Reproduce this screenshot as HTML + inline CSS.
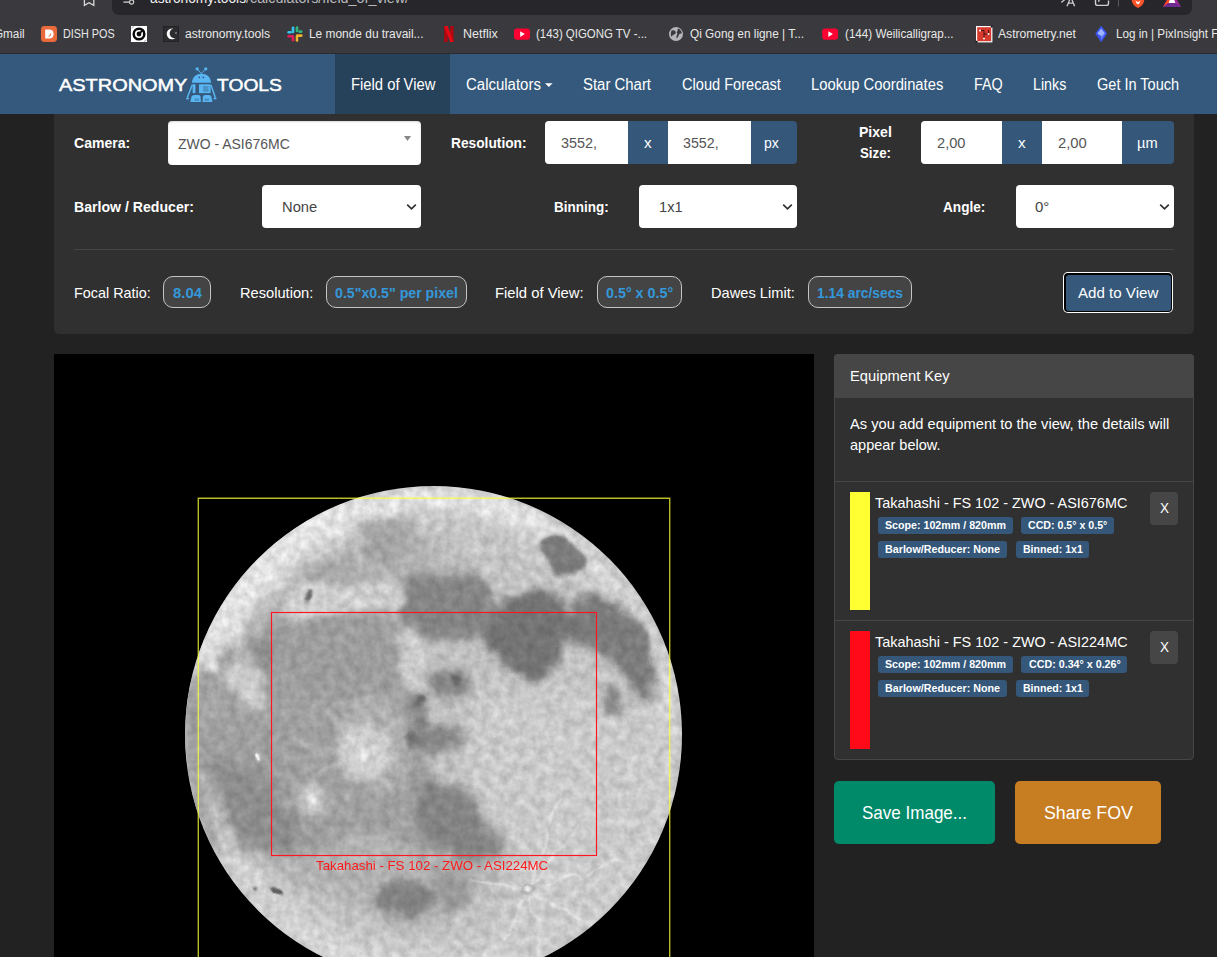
<!DOCTYPE html>
<html lang="en">
<head>
<meta charset="utf-8">
<title>Field of View Calculator</title>
<style>
*{box-sizing:border-box;margin:0;padding:0}
html,body{width:1217px;height:957px;overflow:hidden;background:#222;font-family:"Liberation Sans",sans-serif;}
#root{position:absolute;left:0;top:0;width:1217px;height:957px;overflow:hidden;background:#222}
.b{position:absolute}
.t{position:absolute;white-space:nowrap;transform-origin:0 50%;color:#fff}
svg{position:absolute;overflow:visible}
</style>
</head>
<body>
<div id="root">
<!-- page panel -->
<div class="b" style="left:54px;top:100px;width:1140px;height:234px;background:#303030;border-radius:0 0 5px 5px"></div>
<!-- browser chrome -->
<div class="b" style="left:0;top:0;width:1217px;height:54px;background:#3a3a3e"></div>
<div class="b" style="left:112px;top:-20px;width:1080px;height:34.5px;background:#26262b;border-radius:7px"></div>
<div class="b" style="left:0;top:53px;width:1217px;height:1px;background:#2c2c30"></div>
<!-- navbar -->
<div class="b" style="left:0;top:54px;width:1217px;height:60px;background:#34597c"></div>
<div class="b" style="left:335px;top:54px;width:115px;height:60px;background:#26415a"></div>
<!-- row 1 -->
<div class="b" style="left:168px;top:121px;width:253px;height:44px;background:#fff;border-radius:4px;box-shadow:inset 0 1px 2px rgba(0,0,0,0.16)"></div>
<svg style="left:404px;top:136px" width="7" height="5" viewBox="0 0 7 5"><path d="M0 0h7L3.5 5z" fill="#888"/></svg>
<div class="b" style="left:545px;top:121px;width:252px;height:43px;background:#34577a;border-radius:4px"></div>
<div class="b" style="left:545px;top:121px;width:83px;height:43px;background:#fff;border-radius:4px 0 0 4px"></div>
<div class="b" style="left:668px;top:121px;width:83px;height:43px;background:#fff"></div>
<div class="b" style="left:921px;top:121px;width:253px;height:43px;background:#34577a;border-radius:4px"></div>
<div class="b" style="left:921px;top:121px;width:81px;height:43px;background:#fff;border-radius:4px 0 0 4px"></div>
<div class="b" style="left:1042px;top:121px;width:80px;height:43px;background:#fff"></div>
<!-- row 2 selects -->
<div class="b" style="left:262px;top:185px;width:159px;height:43px;background:#fff;border-radius:4px"></div>
<div class="b" style="left:639px;top:185px;width:158px;height:43px;background:#fff;border-radius:4px"></div>
<div class="b" style="left:1016px;top:185px;width:158px;height:43px;background:#fff;border-radius:4px"></div>
<svg style="left:406.4px;top:202.5px" width="11" height="8" viewBox="0 0 11 8"><path d="M1.2 1.6L5.5 5.8L9.8 1.6" fill="none" stroke="#333" stroke-width="1.7"/></svg>
<svg style="left:782.4px;top:202.5px" width="11" height="8" viewBox="0 0 11 8"><path d="M1.2 1.6L5.5 5.8L9.8 1.6" fill="none" stroke="#333" stroke-width="1.7"/></svg>
<svg style="left:1159.4px;top:202.5px" width="11" height="8" viewBox="0 0 11 8"><path d="M1.2 1.6L5.5 5.8L9.8 1.6" fill="none" stroke="#333" stroke-width="1.7"/></svg>
<!-- hr -->
<div class="b" style="left:74px;top:249px;width:1100px;height:1px;background:#464646"></div>
<!-- stat badges -->
<div class="b" style="left:163px;top:276px;width:48px;height:32px;background:#444;border:1px solid #c4c4c4;border-radius:10px"></div>
<div class="b" style="left:326px;top:276px;width:141px;height:32px;background:#444;border:1px solid #c4c4c4;border-radius:10px"></div>
<div class="b" style="left:597px;top:276px;width:85px;height:32px;background:#444;border:1px solid #c4c4c4;border-radius:10px"></div>
<div class="b" style="left:808px;top:276px;width:104px;height:32px;background:#444;border:1px solid #c4c4c4;border-radius:10px"></div>
<!-- add to view button -->
<div class="b" style="left:1063px;top:272px;width:110px;height:41px;background:#fff;border-radius:5px"></div>
<div class="b" style="left:1064px;top:273px;width:108px;height:39px;background:#000;border-radius:4px"></div>
<div class="b" style="left:1065.5px;top:274.5px;width:105px;height:36px;background:#35587b;border-radius:3px"></div>
<!-- canvas -->
<div class="b" style="left:54px;top:354px;width:760px;height:610px;background:#000"></div>
<!-- equipment card -->
<div class="b" style="left:834px;top:354px;width:360px;height:406px;background:#303030;border:1px solid #464646;border-radius:4px"></div>
<div class="b" style="left:834px;top:354px;width:360px;height:44px;background:#464646;border-radius:4px 4px 0 0"></div>
<div class="b" style="left:835px;top:481px;width:358px;height:1px;background:#464646"></div>
<div class="b" style="left:835px;top:620px;width:358px;height:1px;background:#464646"></div>
<div class="b" style="left:850px;top:492px;width:20px;height:118px;background:#ffff33"></div>
<div class="b" style="left:850px;top:631px;width:20px;height:118px;background:#ff0a18"></div>
<div class="b" style="left:1150px;top:492px;width:28px;height:33px;background:#464646;border-radius:4px"></div>
<div class="b" style="left:1150px;top:631px;width:28px;height:33px;background:#464646;border-radius:4px"></div>
<!-- small badges item 1 -->
<div class="b" style="left:878px;top:517px;width:135px;height:17px;background:#34577a;border-radius:3px"></div>
<div class="b" style="left:1021px;top:517px;width:93px;height:17px;background:#34577a;border-radius:3px"></div>
<div class="b" style="left:878px;top:541px;width:129px;height:17px;background:#34577a;border-radius:3px"></div>
<div class="b" style="left:1016px;top:541px;width:73px;height:17px;background:#34577a;border-radius:3px"></div>
<!-- small badges item 2 -->
<div class="b" style="left:878px;top:656px;width:135px;height:17px;background:#34577a;border-radius:3px"></div>
<div class="b" style="left:1021px;top:656px;width:106px;height:17px;background:#34577a;border-radius:3px"></div>
<div class="b" style="left:878px;top:680px;width:129px;height:17px;background:#34577a;border-radius:3px"></div>
<div class="b" style="left:1016px;top:680px;width:73px;height:17px;background:#34577a;border-radius:3px"></div>
<!-- big buttons -->
<div class="b" style="left:834px;top:781px;width:161px;height:63px;background:#008a6a;border-radius:5px"></div>
<div class="b" style="left:1015px;top:781px;width:146px;height:63px;background:#c77d22;border-radius:5px"></div>
<svg style="left:0;top:0" width="1217" height="957" viewBox="0 0 1217 957">
<defs>
<clipPath id="cv"><rect x="54" y="354" width="760" height="603"/></clipPath>
<clipPath id="mc"><circle cx="433.5" cy="734.5" r="248.3"/></clipPath>
<filter id="b2" x="-20%" y="-20%" width="140%" height="140%"><feGaussianBlur stdDeviation="2"/></filter>
<filter id="b4" x="-20%" y="-20%" width="140%" height="140%"><feGaussianBlur stdDeviation="4"/></filter>
<filter id="b8" x="-20%" y="-20%" width="140%" height="140%"><feGaussianBlur stdDeviation="8"/></filter>
<filter id="b1" x="-20%" y="-20%" width="140%" height="140%"><feGaussianBlur stdDeviation="0.8"/></filter>
<filter id="disp" x="170" y="470" width="530" height="490" filterUnits="userSpaceOnUse" color-interpolation-filters="sRGB">
<feTurbulence type="fractalNoise" baseFrequency="0.035" numOctaves="3" seed="7" result="n"/>
<feDisplacementMap in="SourceGraphic" in2="n" scale="16" xChannelSelector="R" yChannelSelector="G"/>
</filter>
<filter id="tex" x="170" y="470" width="530" height="490" filterUnits="userSpaceOnUse" color-interpolation-filters="sRGB">
<feTurbulence type="fractalNoise" baseFrequency="0.11" numOctaves="4" seed="3" result="n0"/>
<feColorMatrix in="n0" type="matrix" values="1 0 0 0 0  1 0 0 0 0  1 0 0 0 0  0 0 0 0 1" result="n"/>
<feComposite in="SourceGraphic" in2="n" operator="arithmetic" k1="0.3" k2="0.86" k3="0" k4="0"/>
</filter>
<radialGradient id="mg" cx="433.5" cy="734.5" r="248.5" gradientUnits="userSpaceOnUse">
<stop offset="0" stop-color="#bebebe"/><stop offset="0.82" stop-color="#c2c2c2"/><stop offset="0.96" stop-color="#d4d4d4"/><stop offset="1" stop-color="#c4c4c4"/>
</radialGradient>
</defs>
<g clip-path="url(#cv)">
<g filter="url(#tex)">
<circle cx="433.5" cy="734.5" r="248.5" fill="url(#mg)"/>
<g clip-path="url(#mc)"><g filter="url(#disp)">
<g filter="url(#b8)">
<!-- broad tonal regions -->
<path d="M185 700 L215 640 L270 600 L330 560 L400 520 L440 540 L440 620 L400 700 L440 800 L500 870 L430 930 L330 900 L250 860 L200 800Z" fill="#b0b0b0"/>
<path d="M470 690 L600 690 L680 740 L660 860 L560 957 L500 957 L520 860 L470 780Z" fill="#c8c8c8"/>
<path d="M190 640 L230 560 L300 510 L380 490 L300 560 L240 620 L215 690Z" fill="#dcdcdc"/>
<path d="M205 830 L235 860 L290 905 L350 940 L330 957 L270 930 L215 870Z" fill="#cacaca"/>
</g>
<g filter="url(#b4)">
<!-- Procellarum / Imbrium -->
<path d="M272 625 L300 612 L345 610 L395 618 L408 640 L400 668 L410 690 L402 712 L420 745 L440 790 L470 815 L500 835 L498 858 L460 862 L420 850 L385 830 L340 838 L300 858 L265 850 L232 830 L215 790 L210 740 L222 690 L250 650Z" fill="#9e9e9e"/>
<!-- upper dark (Frigoris side / Serenitatis north) -->
<path d="M397 580 L440 572 L476 572 L496 602 L486 638 L440 640 L410 638 L398 610Z" fill="#838383"/>
<path d="M360 525 L400 520 L408 545 L395 563 L365 560Z" fill="#a2a2a2"/>
<path d="M300 565 L355 560 L360 595 L310 600Z" fill="#a8a8a8"/>
<!-- Serenitatis / Tranquillitatis -->
<path d="M487.7 620.4 L505.2 597.9 L535.3 590.3 L560.4 592.8 L570.4 610.4 L590.5 612.9 L593 630.5 L580.5 640.5 L560.4 643 L560.4 665.6 L547.9 678.1 L525.3 680.6 L505.2 665.6 L490.2 653 L482.7 635.5Z" fill="#727272"/>
<!-- Fecunditatis -->
<path d="M590 598 L620 600 L640 625 L650 660 L655 700 L640 700 L625 670 L600 655 L592 630Z" fill="#7e7e7e"/>
<path d="M603 686 L620 690 L622 720 L606 716Z" fill="#868686"/>
<!-- central dark band -->
<path d="M425 668 L468 670 L471 692 L442 698 L426 691Z" fill="#878787"/>
<path d="M404 697 L424 695 L428 724 L462 727 L465 747 L430 751 L407 746Z" fill="#868686"/>
<path d="M370 674 L392 672 L394 694 L372 696Z" fill="#9c9c9c"/>
<!-- Nubium -->
<path d="M420 782 L455 790 L478 800 L482 825 L500 835 L505 850 L490 858 L460 857 L440 850 L418 835Z" fill="#828282"/>
<!-- Humorum + patches -->
<ellipse cx="404" cy="898" rx="28" ry="18" fill="#818181"/>
<path d="M432 868 L470 872 L474 905 L445 915 L432 895Z" fill="#999"/>
<!-- bright highlands inside mare -->
<ellipse cx="374" cy="742" rx="38" ry="50" fill="#adadad"/>
<path d="M372 625 L396 630 L400 668 L372 672Z" fill="#a9a9a9"/>
<ellipse cx="364" cy="753" rx="27" ry="25" fill="#cecece"/>
<ellipse cx="312" cy="800" rx="16" ry="15" fill="#cacaca"/>
<path d="M225 660 L262 690 L268 715 L240 700 L222 680Z" fill="#c4c4c4"/>
<path d="M290 600 L400 590 L402 606 L330 612 L292 622Z" fill="#c6c6c6"/>
<path d="M394 632 L415 627 L429 660 L426 694 L406 690 L398 662Z" fill="#cacaca"/>
</g>
<g filter="url(#b4)">
<path d="M285 622 L340 616 L392 624 L400 650 L385 690 L340 700 L300 690 L280 660Z" fill="#9b9b9b"/>
<path d="M192 690 L215 690 L222 740 L235 800 L222 810 L200 770 L190 730Z" fill="#9c9c9c"/>
<path d="M215 760 L260 770 L300 830 L290 855 L250 845 L225 815Z" fill="#8c8c8c"/>
<path d="M572 600 L600 596 L640 625 L655 680 L640 690 L610 650 L580 640Z" fill="#7a7a7a"/>
</g>
<g filter="url(#b1)" stroke="#e2e2e2" stroke-width="2.2" fill="none" stroke-linecap="round" opacity="0.8">
<path d="M529 891L470 878M529 891L585 820M529 891L540 950M529 891L600 930M529 891L500 950M529 891L560 800M529 891L620 860"/>
</g>
<g filter="url(#b2)" stroke="#c8c8c8" stroke-width="3" fill="none" opacity="0.8">
<path d="M364 753L330 710M364 753L400 720M364 753L320 770M364 753L390 795M364 753L345 800M364 753L300 745"/>
</g>
<g filter="url(#b4)" fill="none">
<path d="M216.3 642.3A236 236 0 0 1 551.5 530.1" stroke="#e4e4e4" stroke-width="18" opacity="0.8"/>
<path d="M222.2 856.5A244 244 0 0 1 194.8 683.8" stroke="#8c8c8c" stroke-width="9" opacity="0.8"/>
<path d="M392.2 968.9A238 238 0 0 1 227.4 853.5" stroke="#d4d4d4" stroke-width="16" opacity="0.7"/>
</g>
<g filter="url(#b4)">
<path d="M284 596 L312 584 L350 588 L385 578 L408 584 L404 606 L372 604 L345 614 L318 610 L290 624Z" fill="#cdcdcd"/>
<path d="M258 642 L272 638 L274 668 L262 672 L255 655Z" fill="#8a8a8a"/>
<path d="M219 653 L233 650 L236 668 L224 673Z" fill="#8e8e8e"/>
<path d="M196 672 L226 676 L230 735 L190 735Z" fill="#a2a2a2"/>
<path d="M232 656 L250 664 L264 682 L262 708 L248 704 L236 690 L226 676Z" fill="#cacaca"/>
</g>
<g filter="url(#b2)">
<ellipse cx="561.6" cy="555.2" rx="25" ry="16" transform="rotate(35 561.6 555.2)" fill="#7a7a7a"/>
<ellipse cx="417" cy="703" rx="6" ry="6" fill="#6c6c6c"/>
<ellipse cx="454" cy="681" rx="6" ry="5" fill="#646464"/>
<ellipse cx="415" cy="738.5" rx="6" ry="5" fill="#6c6c6c"/>
<ellipse cx="364.3" cy="753.4" rx="6" ry="6" fill="#f2f2f2"/>
<ellipse cx="311.6" cy="799.7" rx="4.5" ry="4.5" fill="#ececec"/>

</g>
<g filter="url(#b1)">
<ellipse cx="253.5" cy="759.6" rx="2.6" ry="3.2" fill="#fff"/>
<circle cx="529" cy="891.3" r="6.5" fill="#a9a9a9"/><circle cx="529" cy="891.3" r="4" fill="#e4e4e4"/>
<ellipse cx="309" cy="596" rx="4.5" ry="3" transform="rotate(-20 309 596)" fill="#6a6a6a"/>
<ellipse cx="275.3" cy="893.8" rx="6.5" ry="4" transform="rotate(35 275.3 893.8)" fill="#5c5c5c"/>
<ellipse cx="255" cy="888.8" rx="2.5" ry="2" fill="#6c6c6c"/>
</g>
</g></g>
</g>
<path d="M198.3 970V498.3H669.7V970" fill="none" stroke="#ffff33" stroke-opacity="0.73" stroke-width="1.4"/>
<rect x="271.5" y="612.5" width="325" height="243" fill="none" stroke="#ff1420" stroke-width="1.15"/>
</g>
</svg>
<!-- logo robot -->
<svg style="left:0;top:0" width="340" height="114" viewBox="0 0 340 114">
<g fill="#5ab6f3" stroke="none">
<circle cx="197.1" cy="68.8" r="1.6"/><circle cx="205.8" cy="68.8" r="1.6"/>
<path d="M197.1 68.8L201.2 73.6L205.8 68.8" fill="none" stroke="#5ab6f3" stroke-width="1"/>
<path d="M192 82.8 C192 70.6 211 70.6 211 82.8Z"/>
<rect x="192.6" y="84.3" width="2.8" height="8.8"/>
<rect x="199" y="84.3" width="11.6" height="8.8"/>
<path d="M192.3 84.8L187.3 97.6" fill="none" stroke="#5ab6f3" stroke-width="1.5"/>
<path d="M210.9 84.8L215.3 97.6" fill="none" stroke="#5ab6f3" stroke-width="1.5"/>
<ellipse cx="187.6" cy="98.5" rx="1.6" ry="0.9"/><ellipse cx="215" cy="98.5" rx="1.6" ry="0.9"/>
<path d="M190.3 102.1 L191.6 96.5 Q192.2 95 194 95 L198.5 95 Q200.2 95 200.5 96.8 L200.9 102.1Z"/>
<path d="M202.5 102.1 L202.9 96.8 Q203.2 95 205 95 L209 95 Q210.8 95 211.3 96.5 L212.5 102.1Z"/>
</g>
<g fill="#34597c"><circle cx="199.3" cy="77.3" r="0.9"/><circle cx="203.3" cy="77.3" r="0.9"/>
<rect x="203" y="86" width="5.6" height="5.8" fill="#4a93c6"/>
<path d="M194.5 98.5h4.5v2.5h-4.5zM204.5 98.5h4.5v2.5h-4.5z" fill="#4a93c6"/></g>
<!-- calculators caret -->
<path d="M545 83.2h7.6L548.8 87z" fill="#fff"/>
</svg>
<!-- browser chrome icons -->
<svg style="left:0;top:0" width="1217" height="54" viewBox="0 0 1217 54">
<!-- bookmark outline (cut) -->
<path d="M84.4 -6V5.3L89.1 2.7L93.8 5.3V-6" fill="none" stroke="#d8d8d8" stroke-width="1.3"/>
<!-- tune icon -->
<path d="M123.4 2.1H129.2" stroke="#d0d0d0" stroke-width="1.3" fill="none"/>
<circle cx="131.6" cy="2.1" r="2.1" fill="none" stroke="#d0d0d0" stroke-width="1.2"/>
<!-- translate -->
<path d="M1067 6.2L1070.8 -3L1074.6 6.2M1068.3 3.2H1073.3" fill="none" stroke="#cfcfcf" stroke-width="1.3"/>
<path d="M1061.3 2.6L1066.3 -1.8" stroke="#cfcfcf" stroke-width="1.3" fill="none"/>
<!-- share -->
<path d="M1095.5 -4V3.2Q1095.5 5.4 1097.7 5.4H1106.3Q1108.5 5.4 1108.5 3.2V0.6" fill="none" stroke="#cfcfcf" stroke-width="1.4"/><path d="M1098.6 1.8Q1099 -1.5 1102.5 -2" fill="none" stroke="#cfcfcf" stroke-width="1.3"/>
<rect x="1118" y="-2" width="1" height="8.5" fill="#5a5a5e"/>
<!-- brave lion -->
<path d="M1131 -4L1132 1.5Q1133 5.5 1138 8Q1143 5.5 1144 1.5L1145 -4Z" fill="#fb542b"/>
<path d="M1135.5 0.5L1138 2.2L1140.5 0.5L1139.5 3.2L1138 4.4L1136.5 3.2Z" fill="#fff"/>
<!-- rewards triangle -->
<path d="M1163 7L1172 -9L1181 7Z" fill="#a0259a"/>
<path d="M1163 7L1172 -9L1172 3Z" fill="#ff4724"/>
<path d="M1168.2 4.2L1172 -6L1175.8 4.2Z" fill="#fff"/>
<path d="M1163 7H1181L1176 3H1168Z" fill="#6c2a8f"/>
<!-- DISH POS -->
<rect x="41" y="26" width="16" height="16" rx="3.4" fill="#e9693b"/>
<path d="M45.2 29.4H49.2Q53.6 29.4 53.6 34Q53.6 38.6 49.2 38.6H45.2Z" fill="#fff"/>
<path d="M50.8 33.5Q51 36.2 48.6 36.4" fill="none" stroke="#e9693b" stroke-width="1"/>
<!-- spiral -->
<rect x="131" y="26" width="16" height="16" fill="#fff"/>
<circle cx="139" cy="34" r="5.3" fill="none" stroke="#0a0a0a" stroke-width="2.5"/>
<circle cx="139" cy="34" r="2.4" fill="#0a0a0a"/>
<path d="M140.5 32.4L142.8 30.2" stroke="#0a0a0a" stroke-width="2"/>
<path d="M132.6 30.6Q134 27.6 137 26.8M145.4 37.4Q144 40.4 141 41.2" fill="none" stroke="#fff" stroke-width="1.1"/>
<path d="M131.5 28L134 26.5M146.5 40L144 41.5" stroke="#999" stroke-width="0.8"/>
<!-- moon favicon -->
<rect x="163.5" y="26.5" width="15" height="15" fill="#2c2c2e" stroke="#232325" stroke-width="1"/>
<path d="M173.4 28.6A5.4 5.4 0 1 0 175.6 38A4.6 4.6 0 0 1 173.4 28.6Z" fill="#fff"/>
<circle cx="176" cy="33" r="0.7" fill="#ddd"/><circle cx="168" cy="33.3" r="0.5" fill="#ccc"/><circle cx="169.3" cy="38.6" r="0.5" fill="#ccc"/>
<!-- slack -->
<g stroke-width="2.6" stroke-linecap="round" fill="none">
<path d="M293 27.8V32" stroke="#36c5f0"/><path d="M288.6 32.2H290.5" stroke="#36c5f0"/>
<path d="M297 31V27.6" stroke="#2eb67d"/><path d="M297.2 35.6H301.4" stroke="#ecb22e"/>
<path d="M301.2 31.6H299.6" stroke="#2eb67d"/>
<path d="M297 36.4V40.4" stroke="#ecb22e"/>
<path d="M293 36.8V40.2" stroke="#e01e5a"/><path d="M288.6 36.2H292.6" stroke="#e01e5a"/>
</g>
<!-- netflix -->
<path d="M444.2 26H447.6V42H444.2Z" fill="#b1060f"/><path d="M450.2 26H453.6V42H450.2Z" fill="#b1060f"/>
<path d="M444.2 26H447.6L453.6 42H450.2Z" fill="#e50914"/>
<!-- youtube x2 -->
<rect x="514" y="28.4" width="16" height="11.4" rx="3" fill="#ff0033"/><path d="M520.2 31.3L524.8 34.1L520.2 36.9Z" fill="#fff"/>
<rect x="822.2" y="28.5" width="15.8" height="11.2" rx="3" fill="#ff0033"/><path d="M828.3 31.3L832.9 34.1L828.3 36.9Z" fill="#fff"/>
<!-- globe -->
<circle cx="676" cy="34.1" r="7" fill="#b4b4b9"/>
<path d="M671.5 30.5Q674 29.5 675.5 31.5Q676.5 33.5 674 34.5Q672 35 671.5 37Q670 34 671.5 30.5ZM678 28.6Q681.5 30 681.8 33.5Q680 33 679 34.5Q678.6 37 676.5 38.6Q676 36 677.4 34Q676.2 32.4 677.4 31Z" fill="#3a3a3e"/>
<!-- astrometry -->
<rect x="976.6" y="26.6" width="15.2" height="15.2" fill="#d8392f" stroke="#fff" stroke-width="1.2"/>
<path d="M980 30.5H984V38.5M984 34H988.5V30" fill="none" stroke="#3a0b08" stroke-width="0.9"/>
<circle cx="980" cy="30.5" r="1" fill="#fff"/><circle cx="988.5" cy="34" r="1" fill="#fff"/><circle cx="984" cy="38.5" r="1" fill="#fff"/>
<circle cx="991.8" cy="26.6" r="1.1" fill="#111"/><circle cx="976.6" cy="41.8" r="1.1" fill="#111"/>
<!-- pixinsight -->
<path d="M1101.2 25.8L1107.2 33.6L1101.2 42.2L1095.2 33.6Z" fill="#3b55ee"/>
<path d="M1101.2 28.5L1105 33.6L1101.2 36.2L1097.4 33.6Z" fill="#9fb4ff"/>
<path d="M1101.2 36.2L1105 33.6L1101.2 40Z" fill="#6f86ff"/>
</svg>
<span class="t" style="left:58.5px;top:75px;font-size:16px;line-height:22px;font-weight:400;color:#fff;-webkit-text-stroke:0.45px #fff;transform:scaleX(1.2451)">ASTRONOMY</span>
<span class="t" style="left:216.6px;top:75px;font-size:16px;line-height:22px;font-weight:400;color:#fff;-webkit-text-stroke:0.45px #fff;transform:scaleX(1.2029)">TOOLS</span>
<span class="t" style="left:351.0px;top:74px;font-size:16px;line-height:22px;font-weight:400;color:#fff;transform:scaleX(0.9243)">Field of View</span>
<span class="t" style="left:465.6px;top:74px;font-size:16px;line-height:22px;font-weight:400;color:#fff;transform:scaleX(0.9359)">Calculators</span>
<span class="t" style="left:583.4px;top:74px;font-size:16px;line-height:22px;font-weight:400;color:#fff;transform:scaleX(0.9325)">Star Chart</span>
<span class="t" style="left:681.5px;top:74px;font-size:16px;line-height:22px;font-weight:400;color:#fff;transform:scaleX(0.9115)">Cloud Forecast</span>
<span class="t" style="left:810.7px;top:74px;font-size:16px;line-height:22px;font-weight:400;color:#fff;transform:scaleX(0.9238)">Lookup Coordinates</span>
<span class="t" style="left:973.5px;top:74px;font-size:16px;line-height:22px;font-weight:400;color:#fff;transform:scaleX(0.8996)">FAQ</span>
<span class="t" style="left:1032.8px;top:74px;font-size:16px;line-height:22px;font-weight:400;color:#fff;transform:scaleX(0.8913)">Links</span>
<span class="t" style="left:1096.7px;top:74px;font-size:16px;line-height:22px;font-weight:400;color:#fff;transform:scaleX(0.9078)">Get In Touch</span>
<span class="t" style="left:73.9px;top:132px;font-size:15px;line-height:21px;font-weight:700;color:#fff;transform:scaleX(0.9362)">Camera:</span>
<span class="t" style="left:177.5px;top:134px;font-size:14px;line-height:20px;font-weight:400;color:#555;transform:scaleX(0.9979)">ZWO - ASI676MC</span>
<span class="t" style="left:451.2px;top:132px;font-size:15px;line-height:21px;font-weight:700;color:#fff;transform:scaleX(0.9164)">Resolution:</span>
<span class="t" style="left:560.5px;top:132px;font-size:15px;line-height:21px;font-weight:400;color:#555;transform:scaleX(0.9588)">3552,</span>
<span class="t" style="left:644.1px;top:132px;font-size:15px;line-height:21px;font-weight:400;color:#fff;transform:scaleX(1.0133)">x</span>
<span class="t" style="left:683.3px;top:132px;font-size:15px;line-height:21px;font-weight:400;color:#555;transform:scaleX(0.9481)">3552,</span>
<span class="t" style="left:764.4px;top:132px;font-size:15px;line-height:21px;font-weight:400;color:#fff;transform:scaleX(0.9341)">px</span>
<span class="t" style="left:858.6px;top:121px;font-size:15px;line-height:21px;font-weight:700;color:#fff;transform:scaleX(0.9363)">Pixel</span>
<span class="t" style="left:860.4px;top:142px;font-size:15px;line-height:21px;font-weight:700;color:#fff;transform:scaleX(0.8853)">Size:</span>
<span class="t" style="left:937.0px;top:132px;font-size:15px;line-height:21px;font-weight:400;color:#555;transform:scaleX(0.9759)">2,00</span>
<span class="t" style="left:1018.0px;top:132px;font-size:15px;line-height:21px;font-weight:400;color:#fff;transform:scaleX(1.0133)">x</span>
<span class="t" style="left:1057.5px;top:132px;font-size:15px;line-height:21px;font-weight:400;color:#555;transform:scaleX(0.9862)">2,00</span>
<span class="t" style="left:1137.4px;top:132px;font-size:15px;line-height:21px;font-weight:400;color:#fff;transform:scaleX(0.9744)">µm</span>
<span class="t" style="left:74.0px;top:196px;font-size:15px;line-height:21px;font-weight:700;color:#fff;transform:scaleX(0.9409)">Barlow / Reducer:</span>
<span class="t" style="left:281.7px;top:196px;font-size:15px;line-height:21px;font-weight:400;color:#444;transform:scaleX(0.9816)">None</span>
<span class="t" style="left:554.3px;top:196px;font-size:15px;line-height:21px;font-weight:700;color:#fff;transform:scaleX(0.8993)">Binning:</span>
<span class="t" style="left:659.0px;top:196px;font-size:15px;line-height:21px;font-weight:400;color:#444;transform:scaleX(0.9757)">1x1</span>
<span class="t" style="left:943.2px;top:196px;font-size:15px;line-height:21px;font-weight:700;color:#fff;transform:scaleX(0.9085)">Angle:</span>
<span class="t" style="left:1035.0px;top:196px;font-size:15px;line-height:21px;font-weight:400;color:#444;transform:scaleX(1.0039)">0°</span>
<span class="t" style="left:73.6px;top:282px;font-size:15px;line-height:21px;font-weight:400;color:#fff;transform:scaleX(0.9594)">Focal Ratio:</span>
<span class="t" style="left:172.8px;top:282px;font-size:15px;line-height:21px;font-weight:700;color:#3498db;transform:scaleX(0.9896)">8.04</span>
<span class="t" style="left:239.7px;top:282px;font-size:15px;line-height:21px;font-weight:400;color:#fff;transform:scaleX(0.9767)">Resolution:</span>
<span class="t" style="left:334.8px;top:282px;font-size:15px;line-height:21px;font-weight:700;color:#3498db;transform:scaleX(0.9444)">0.5"x0.5" per pixel</span>
<span class="t" style="left:495.2px;top:282px;font-size:15px;line-height:21px;font-weight:400;color:#fff;transform:scaleX(0.9870)">Field of View:</span>
<span class="t" style="left:605.8px;top:282px;font-size:15px;line-height:21px;font-weight:700;color:#3498db;transform:scaleX(0.9547)">0.5° x 0.5°</span>
<span class="t" style="left:710.7px;top:282px;font-size:15px;line-height:21px;font-weight:400;color:#fff;transform:scaleX(0.9760)">Dawes Limit:</span>
<span class="t" style="left:817.0px;top:282px;font-size:15px;line-height:21px;font-weight:700;color:#3498db;transform:scaleX(0.9206)">1.14 arc/secs</span>
<span class="t" style="left:1078.0px;top:282px;font-size:15px;line-height:21px;font-weight:400;color:#fff;transform:scaleX(1.0065)">Add to View</span>
<span class="t" style="left:850.4px;top:365px;font-size:15px;line-height:21px;font-weight:400;color:#fff;transform:scaleX(0.9790)">Equipment Key</span>
<span class="t" style="left:850.4px;top:413px;font-size:15px;line-height:21px;font-weight:400;color:#fff;transform:scaleX(0.9790)">As you add equipment to the view, the details will</span>
<span class="t" style="left:850.4px;top:434px;font-size:15px;line-height:21px;font-weight:400;color:#fff;transform:scaleX(0.9700)">appear below.</span>
<span class="t" style="left:875.2px;top:492px;font-size:15px;line-height:21px;font-weight:400;color:#fff;transform:scaleX(0.9608)">Takahashi - FS 102 - ZWO - ASI676MC</span>
<span class="t" style="left:884.7px;top:518px;font-size:11px;line-height:15px;font-weight:700;color:#fff;transform:scaleX(0.9693)">Scope: 102mm / 820mm</span>
<span class="t" style="left:1028.4px;top:518px;font-size:11px;line-height:15px;font-weight:700;color:#fff;transform:scaleX(0.9651)">CCD: 0.5° x 0.5°</span>
<span class="t" style="left:885.0px;top:542px;font-size:11px;line-height:15px;font-weight:700;color:#fff;transform:scaleX(0.9748)">Barlow/Reducer: None</span>
<span class="t" style="left:1022.5px;top:542px;font-size:11px;line-height:15px;font-weight:700;color:#fff;transform:scaleX(0.9590)">Binned: 1x1</span>
<span class="t" style="left:1159.7px;top:497px;font-size:15px;line-height:21px;font-weight:400;color:#fff;transform:scaleX(0.8986)">X</span>
<span class="t" style="left:875.2px;top:631px;font-size:15px;line-height:21px;font-weight:400;color:#fff;transform:scaleX(0.9619)">Takahashi - FS 102 - ZWO - ASI224MC</span>
<span class="t" style="left:884.7px;top:657px;font-size:11px;line-height:15px;font-weight:700;color:#fff;transform:scaleX(0.9693)">Scope: 102mm / 820mm</span>
<span class="t" style="left:1028.6px;top:657px;font-size:11px;line-height:15px;font-weight:700;color:#fff;transform:scaleX(0.9724)">CCD: 0.34° x 0.26°</span>
<span class="t" style="left:885.0px;top:681px;font-size:11px;line-height:15px;font-weight:700;color:#fff;transform:scaleX(0.9748)">Barlow/Reducer: None</span>
<span class="t" style="left:1022.5px;top:681px;font-size:11px;line-height:15px;font-weight:700;color:#fff;transform:scaleX(0.9590)">Binned: 1x1</span>
<span class="t" style="left:1159.7px;top:636px;font-size:15px;line-height:21px;font-weight:400;color:#fff;transform:scaleX(0.8986)">X</span>
<span class="t" style="left:862.4px;top:799px;font-size:19px;line-height:27px;font-weight:400;color:#fff;transform:scaleX(0.8956)">Save Image...</span>
<span class="t" style="left:1043.7px;top:799px;font-size:19px;line-height:27px;font-weight:400;color:#fff;transform:scaleX(0.9353)">Share FOV</span>
<span class="t" style="left:316.2px;top:856px;font-size:13.3px;line-height:19px;font-weight:400;color:#ff1a1a;transform:scaleX(0.9975)">Takahashi - FS 102 - ZWO - ASI224MC</span>
<span class="t" style="left:150.0px;top:-12px;font-size:14px;line-height:20px;font-weight:400;color:#f0f0f0;transform:scaleX(0.9818)">astronomy.tools</span>
<span class="t" style="left:246.0px;top:-12px;font-size:14px;line-height:20px;font-weight:400;color:#b9b9bd;transform:scaleX(1.0217)">/calculators/field_of_view/</span>
<span class="t" style="left:-6.4px;top:26px;font-size:12px;line-height:17px;font-weight:400;color:#e8e8e8;transform:scaleX(0.9763)">Gmail</span>
<span class="t" style="left:63.0px;top:26px;font-size:12px;line-height:17px;font-weight:400;color:#e8e8e8;transform:scaleX(0.8996)">DISH POS</span>
<span class="t" style="left:185.0px;top:26px;font-size:12px;line-height:17px;font-weight:400;color:#e8e8e8;transform:scaleX(1.0142)">astronomy.tools</span>
<span class="t" style="left:309.0px;top:26px;font-size:12px;line-height:17px;font-weight:400;color:#e8e8e8;transform:scaleX(0.9921)">Le monde du travail...</span>
<span class="t" style="left:463.0px;top:26px;font-size:12px;line-height:17px;font-weight:400;color:#e8e8e8;transform:scaleX(1.0407)">Netflix</span>
<span class="t" style="left:536.0px;top:26px;font-size:12px;line-height:17px;font-weight:400;color:#e8e8e8;transform:scaleX(0.9530)">(143) QIGONG TV -...</span>
<span class="t" style="left:690.0px;top:26px;font-size:12px;line-height:17px;font-weight:400;color:#e8e8e8;transform:scaleX(0.9858)">Qi Gong en ligne | T...</span>
<span class="t" style="left:844.5px;top:26px;font-size:12px;line-height:17px;font-weight:400;color:#e8e8e8;transform:scaleX(0.9702)">(144) Weilicalligrap...</span>
<span class="t" style="left:998.0px;top:26px;font-size:12px;line-height:17px;font-weight:400;color:#e8e8e8;transform:scaleX(1.0111)">Astrometry.net</span>
<span class="t" style="left:1115.6px;top:26px;font-size:12px;line-height:17px;font-weight:400;color:#e8e8e8;transform:scaleX(0.9736)">Log in | PixInsight F</span>
</div>
</body>
</html>
